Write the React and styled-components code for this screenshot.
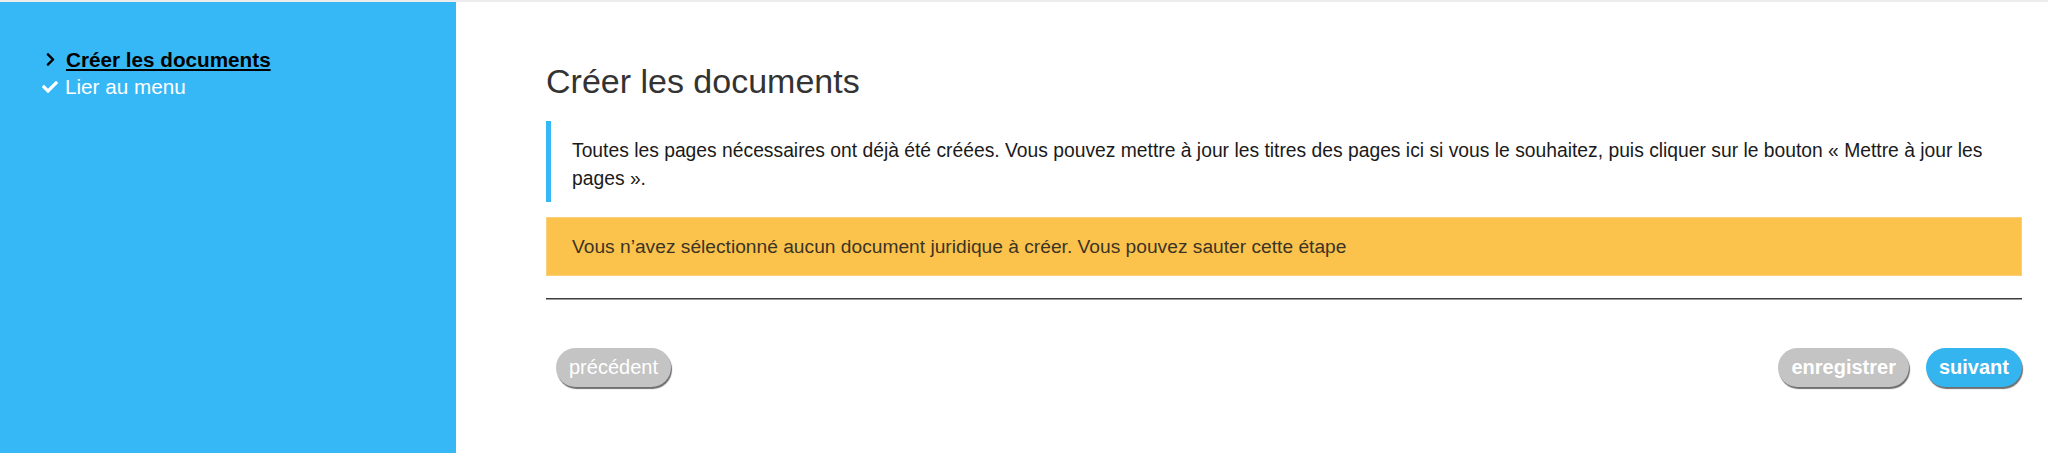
import React from 'react';
import styled, { createGlobalStyle } from 'styled-components';
import { FaChevronRight, FaCheck } from 'react-icons/fa';

const GlobalStyle = createGlobalStyle`
  html, body {
    margin: 0;
    padding: 0;
    background: #fff;
    font-family: "Liberation Sans", Arial, Helvetica, sans-serif;
  }
`;

const Page = styled.div`
  display: flex;
  height: 451px;
  border-top: 2px solid #ececec;
`;

const Sidebar = styled.nav`
  width: 456px;
  flex-shrink: 0;
  background-color: #37b8f6;
  padding: 44px 0 0 42px;
  box-sizing: border-box;
`;

const StepList = styled.ul`
  list-style: none;
  margin: 0;
  padding: 0;
`;

const Step = styled.li`
  display: flex;
  align-items: center;
  font-size: 20.7px;
  line-height: 27px;
  color: ${(p) => (p.$current ? '#000' : '#fff')};
  font-weight: ${(p) => (p.$current ? 'bold' : 'normal')};

  a {
    color: inherit;
    text-decoration: underline;
    text-underline-offset: 2px;
  }
`;

const StepIcon = styled.span`
  display: inline-flex;
  width: 23px;
  padding-left: ${(p) => (p.$check ? '0' : '1px')};
  font-size: ${(p) => (p.$check ? '16px' : '15px')};
`;

const Main = styled.main`
  flex: 1;
  padding: 0 26px 0 90px;
`;

const Title = styled.h1`
  margin: 59px 0 20px;
  font-size: 34px;
  line-height: 40px;
  font-weight: normal;
  color: #333;
`;

const Info = styled.div`
  border-left: 5px solid #37b8f6;
  padding: 16px 20px 9px 21px;
  font-size: 19.3px;
  line-height: 28px;
  color: #1a1a1a;

  p {
    margin: 0;
  }
`;

const Warning = styled.div`
  margin-top: 15px;
  background-color: #fbc34b;
  border: 1px solid #fcd07a;
  padding: 15px 25px;
  font-size: 19.2px;
  line-height: 27px;
  color: #3b3426;
`;

const Rule = styled.hr`
  margin: 22px 0 0;
  border: 0;
  border-top: 1px solid #3e3e3e;
  border-bottom: 1px solid #9a9a9a;
`;

const Actions = styled.div`
  display: flex;
  justify-content: space-between;
  align-items: center;
  margin-top: 48px;
`;

const Group = styled.div`
  display: flex;
  gap: 17px;
  margin-left: ${(p) => p.$indent || 0};
`;

const Button = styled.button`
  height: 39px;
  padding: 0 13px;
  border: 0;
  border-radius: 20px;
  background-color: ${(p) => (p.$primary ? '#35b5f0' : '#c4c4c4')};
  color: #fff;
  font-family: inherit;
  font-size: 20px;
  font-weight: ${(p) => (p.$bold ? 'bold' : 'normal')};
  box-shadow: 1px 2px 1px #6f6f6f;
  cursor: pointer;
`;

export default function App() {
  return (
    <>
      <GlobalStyle />
      <Page>
        <Sidebar>
          <StepList>
            <Step $current>
              <StepIcon>
                <FaChevronRight />
              </StepIcon>
              <a href="#docs">Créer les documents</a>
            </Step>
            <Step>
              <StepIcon $check>
                <FaCheck />
              </StepIcon>
              Lier au menu
            </Step>
          </StepList>
        </Sidebar>
        <Main>
          <Title>Créer les documents</Title>
          <Info>
            <p>
              Toutes les pages nécessaires ont déjà été créées. Vous pouvez mettre à jour les titres des pages ici si
              vous le souhaitez, puis cliquer sur le bouton « Mettre à jour les pages ».
            </p>
          </Info>
          <Warning>
            Vous n’avez sélectionné aucun document juridique à créer. Vous pouvez sauter cette étape
          </Warning>
          <Rule />
          <Actions>
            <Group $indent="10px">
              <Button>précédent</Button>
            </Group>
            <Group>
              <Button $bold>enregistrer</Button>
              <Button $bold $primary>
                suivant
              </Button>
            </Group>
          </Actions>
        </Main>
      </Page>
    </>
  );
}
